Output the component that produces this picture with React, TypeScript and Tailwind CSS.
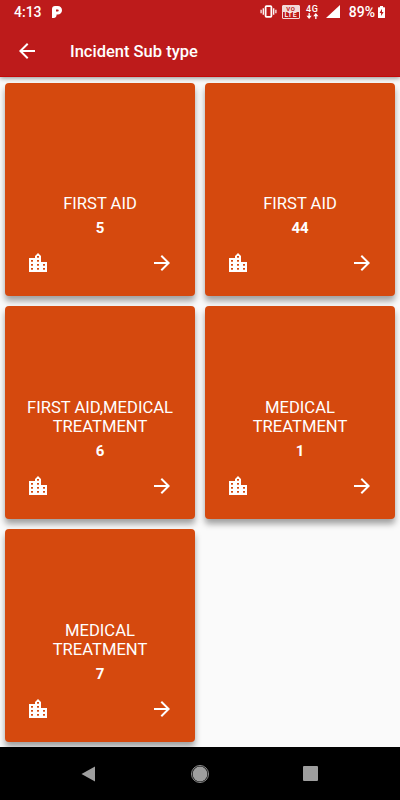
import { MdArrowBack, MdArrowForward } from 'react-icons/md'

type SubType = {
  id: number
  lines: string[]
  count: number
}

const subTypes: SubType[] = [
  { id: 1, lines: ['FIRST AID'], count: 5 },
  { id: 2, lines: ['FIRST AID'], count: 44 },
  { id: 3, lines: ['FIRST AID,MEDICAL', 'TREATMENT'], count: 6 },
  { id: 4, lines: ['MEDICAL', 'TREATMENT'], count: 1 },
  { id: 5, lines: ['MEDICAL', 'TREATMENT'], count: 7 },
]

// x, y of each window in the building icon
const cityWindows = [
  [5, 9], [5, 13], [5, 17],
  [11, 5], [11, 9], [11, 13], [11, 17],
  [17, 13], [17, 17],
]

function CityIcon() {
  return (
    <svg width="24" height="24" viewBox="0 0 24 24">
      <path fill="#fff" d="M15 11V5l-3-3-3 3v2H3v14h18V11z" />
      {cityWindows.map(([x, y]) => (
        <rect key={`${x}-${y}`} x={x} y={y} width="2" height="1.7" fill="#d5490e" />
      ))}
    </svg>
  )
}

function VibrateIcon() {
  return (
    <svg width="17" height="13" viewBox="0 0 17 13" fill="none" stroke="#fff">
      <rect x="5.6" y="1.1" width="5.8" height="10.8" rx="0.8" strokeWidth="1.8" />
      <path d="M3.3 3.2v6.6M13.7 3.2v6.6" strokeWidth="1.3" />
      <path d="M1.1 4.7v3.6M15.9 4.7v3.6" strokeWidth="1.2" />
    </svg>
  )
}

function VolteIcon() {
  return (
    <div className="flex h-[14px] w-[18px] flex-col rounded-[1px] border border-[#f3dada] text-center leading-none">
      <div className="h-[6px] bg-[#f3dada] text-[6px] font-bold leading-[6px] tracking-[0.5px] text-[#bd1b1b]">VO</div>
      <div className="h-[6px] text-[7px] font-medium leading-[7px] tracking-[0.5px] text-white">LTE</div>
    </div>
  )
}

function DataIcon() {
  return (
    <div className="flex w-[13px] flex-col items-center">
      <span className="text-[9px] font-medium leading-[8px] tracking-[0.6px]">4G</span>
      <svg width="13" height="6" viewBox="0 0 13 6" fill="#fff">
        <path d="M2.5 0h1.3v2.8h1.9L3.1 6 .5 2.8h2zM9.2 6h1.3V3.2h1.9L9.8 0 7.2 3.2h2z" />
      </svg>
    </div>
  )
}

function StatusBar() {
  return (
    <div className="flex h-6 items-center pb-px pl-[14px] pr-[15px] text-sm font-medium">
      <span className="leading-4">4:13</span>
      <svg className="ml-[10px]" width="10" height="12" viewBox="0 0 10 12">
        <path
          fill="#fff"
          fillRule="evenodd"
          d="M0 3C0 1 1.2 0 3 0h2.8C8.3 0 10 1.9 10 4.3S8.2 8.6 5.8 8.6H4.6C4.6 10.6 3.6 12 1.8 12H0zM4 3.4v2h1.7a1 1 0 0 0 0-2z"
        />
      </svg>
      <div className="ml-auto flex items-center">
        <VibrateIcon />
        <div className="ml-[5px]">
          <VolteIcon />
        </div>
        <div className="ml-[6px]">
          <DataIcon />
        </div>
        <svg className="ml-[7px]" width="14" height="13" viewBox="0 0 14 13" fill="#fff">
          <path d="M14 0v13H0z" />
        </svg>
        <span className="ml-[9px] leading-4">89%</span>
        <svg className="ml-[3px]" width="7" height="12" viewBox="0 0 7 12">
          <path fill="#fff" d="M2 0h3v1.3h1.5q.5 0 .5.5V11.5q0 .5-.5.5H.5q-.5 0-.5-.5V1.800q0-.5.5-.5H2z" />
          <path fill="#bd1b1b" d="M4 2.8 1.5 7h1.6v3L5.6 5.900H4z" />
        </svg>
      </div>
    </div>
  )
}

function SubTypeCard({ item }: { item: SubType }) {
  return (
    <button
      type="button"
      className="flex h-[213px] flex-col justify-end rounded bg-[#d5490e] px-[21px] pb-[21px] text-white shadow-[0_5px_6px_rgba(0,0,0,0.36)]"
    >
      <div className="-mx-4 self-stretch text-center text-[16.6px] leading-[19px]">
        {item.lines.map((line) => (
          <div key={line}>{line}</div>
        ))}
      </div>
      <div className="mt-[6px] self-stretch text-center text-[15px] font-bold leading-[18px]">
        {item.count}
      </div>
      <div className="mt-[14px] flex items-center justify-between self-stretch">
        <CityIcon />
        <MdArrowForward size={24} />
      </div>
    </button>
  )
}

export default function App() {
  return (
    <div className="flex h-[800px] w-[400px] flex-col overflow-hidden bg-[#fafafa] font-[Roboto,sans-serif]">
      <header className="z-10 h-[77px] border-b border-[#c40808] bg-[#bd1b1b] text-white shadow-[0_1px_5px_rgba(0,0,0,0.45)]">
        <StatusBar />
        <div className="flex h-[54px] items-center pl-[15px]">
          <MdArrowBack size={24} />
          <h1 className="ml-[31px] pt-[2px] text-[16.5px] font-medium">Incident Sub type</h1>
        </div>
      </header>

      <main className="grid flex-1 grid-cols-2 content-start gap-[10px] overflow-hidden px-[5px] pt-[6px]">
        {subTypes.map((item) => (
          <SubTypeCard key={item.id} item={item} />
        ))}
      </main>

      <nav className="z-10 flex h-[53px] items-center justify-between bg-black pl-[81px] pr-[82px]">
        <svg width="15" height="16" viewBox="0 0 15 16" fill="#9e9e9e">
          <path d="M14 0.5v15L0.5 8z" />
        </svg>
        <svg width="18" height="18" viewBox="0 0 18 18">
          <circle cx="9" cy="9" r="8.5" fill="none" stroke="#9e9e9e" strokeWidth="0.9" />
          <circle cx="9" cy="9" r="7.4" fill="#9e9e9e" />
        </svg>
        <div className="h-[15px] w-[15px] rounded-[1px] bg-[#9e9e9e]" />
      </nav>
    </div>
  )
}
